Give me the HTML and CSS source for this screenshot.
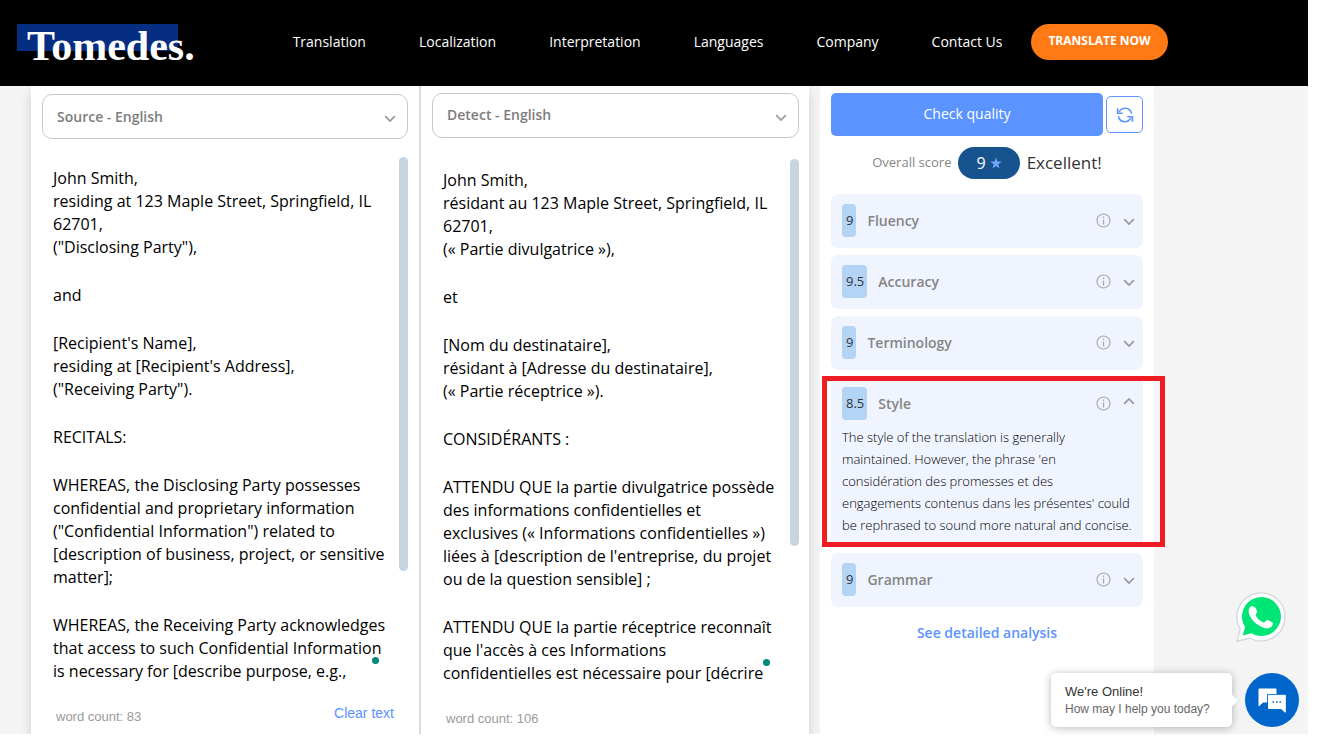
FILE: index.html
```html
<!DOCTYPE html>
<html lang="en">
<head>
<meta charset="utf-8">
<meta name="viewport" content="width=device-width, initial-scale=1">
<title>Tomedes - Translation quality</title>
<link rel="stylesheet" href="styles.css">
</head>
<body>
<svg class="sprite" aria-hidden="true">
  <symbol id="chevron" viewBox="0 0 12 8"><path d="M1.200 1.200 6 6l4.800-4.800" fill="none" stroke="currentColor" stroke-width="1.700"/></symbol>
  <symbol id="info" viewBox="0 0 15 15"><circle cx="7.500" cy="7.500" r="6.500" fill="none" stroke="currentColor" stroke-width="1.200"/><path d="M7.500 6.500v5M7.500 3.500v1.600" fill="none" stroke="currentColor" stroke-width="1.300"/></symbol>
</svg>
<div class="page">
  <header class="header">
    <a class="logo" href="#">Tomedes.</a>
    <nav class="nav">
      <a href="#">Translation</a>
      <a href="#">Localization</a>
      <a href="#">Interpretation</a>
      <a href="#">Languages</a>
      <a href="#">Company</a>
      <a href="#">Contact Us</a>
    </nav>
    <a class="cta" href="#">TRANSLATE NOW</a>
  </header>

  <main class="main">
    <div class="editor">
      <section class="column source">
        <div class="picker">
          <select aria-label="Source language"><option>Source - English</option></select>
          <svg class="chevron"><use href="#chevron"/></svg>
        </div>
        <div class="pane">
          <div class="text" role="textbox" aria-multiline="true" aria-label="Source text" contenteditable="true" spellcheck="false">
            <p>John Smith,<br>residing at 123 Maple Street, Springfield, IL 62701,<br>("Disclosing Party"),</p>
            <p>and</p>
            <p>[Recipient's Name],<br>residing at [Recipient's Address],<br>("Receiving Party").</p>
            <p>RECITALS:</p>
            <p>WHEREAS, the Disclosing Party possesses confidential and proprietary information ("Confidential Information") related to [description of business, project, or sensitive matter];</p>
            <p>WHEREAS, the Receiving Party acknowledges that access to such Confidential Information is necessary for [describe purpose, e.g.,</p>
          </div>
          <div class="scroll"></div>
          <span class="dot"></span>
        </div>
        <div class="foot">
          <span class="count">word count: 83</span>
          <button class="clear" type="button">Clear text</button>
        </div>
      </section>
      <section class="column target">
        <div class="picker">
          <select aria-label="Target language"><option>Detect - English</option></select>
          <svg class="chevron"><use href="#chevron"/></svg>
        </div>
        <div class="pane">
          <div class="text" role="textbox" aria-multiline="true" aria-label="Translated text" contenteditable="true" spellcheck="false" lang="fr">
            <p>John Smith,<br>résidant au 123 Maple Street, Springfield, IL 62701,<br>(« Partie divulgatrice »),</p>
            <p>et</p>
            <p>[Nom du destinataire],<br>résidant à [Adresse du destinataire],<br>(« Partie réceptrice »).</p>
            <p>CONSIDÉRANTS :</p>
            <p>ATTENDU QUE la partie divulgatrice possède des informations confidentielles et exclusives (« Informations confidentielles ») liées à [description de l'entreprise, du projet ou de la question sensible] ;</p>
            <p>ATTENDU QUE la partie réceptrice reconnaît que l'accès à ces Informations confidentielles est nécessaire pour [décrire</p>
          </div>
          <div class="scroll"></div>
          <span class="dot"></span>
        </div>
        <div class="foot">
          <span class="count">word count: 106</span>
        </div>
      </section>
    </div>

    <aside class="quality">
      <div class="actions">
        <button class="check" type="button">Check quality</button>
        <button class="refresh" type="button" aria-label="Refresh">
          <svg viewBox="0 0 20 20"><path d="M3.500 6.500C5 4 7.200 2.600 10 2.600c3.800 0 6.700 2.500 7.400 6M16.500 13.500c-1.500 2.500-3.700 3.900-6.500 3.900-3.800 0-6.700-2.500-7.400-6" fill="none" stroke="currentColor" stroke-width="1.700"/><path d="M1.800 2.500v5.600h5.600M18.200 17.500v-5.600h-5.600" fill="none" stroke="currentColor" stroke-width="1.800"/></svg>
        </button>
      </div>
      <div class="score">
        <span class="score-label">Overall score</span>
        <span class="pill">9 <svg viewBox="0 0 12 12"><path d="M6 .6l1.400 3.900 4.200.1-3.300 2.600 1.200 4L6 8.900l-3.500 2.300 1.200-4L.4 4.600l4.200-.1z" fill="#75a6ff"/></svg></span>
        <strong>Excellent!</strong>
      </div>
      <div class="cards">
        <article class="card">
          <button class="card-head" type="button" aria-expanded="false"><span class="badge">9</span><span class="name">Fluency</span><svg class="info"><use href="#info"/></svg><svg class="chevron"><use href="#chevron"/></svg></button>
        </article>
        <article class="card">
          <button class="card-head" type="button" aria-expanded="false"><span class="badge">9.5</span><span class="name">Accuracy</span><svg class="info"><use href="#info"/></svg><svg class="chevron"><use href="#chevron"/></svg></button>
        </article>
        <article class="card">
          <button class="card-head" type="button" aria-expanded="false"><span class="badge">9</span><span class="name">Terminology</span><svg class="info"><use href="#info"/></svg><svg class="chevron"><use href="#chevron"/></svg></button>
        </article>
        <article class="card open">
          <button class="card-head" type="button" aria-expanded="true"><span class="badge">8.5</span><span class="name">Style</span><svg class="info"><use href="#info"/></svg><svg class="chevron"><use href="#chevron"/></svg></button>
          <p class="detail">The style of the translation is generally maintained. However, the phrase 'en considération des promesses et des engagements contenus dans les présentes' could be rephrased to sound more natural and concise.</p>
          <span class="highlight"></span>
        </article>
        <article class="card">
          <button class="card-head" type="button" aria-expanded="false"><span class="badge">9</span><span class="name">Grammar</span><svg class="info"><use href="#info"/></svg><svg class="chevron"><use href="#chevron"/></svg></button>
        </article>
      </div>
      <a class="more" href="#">See detailed analysis</a>
    </aside>
  </main>

  <a class="whatsapp" href="#" aria-label="WhatsApp">
    <svg viewBox="0 0 50 50"><path d="M1 49.300 4.200 37A24 24 0 1 1 13.500 46z" fill="#fff" stroke="#d0d8dc" stroke-width="1.300" stroke-linejoin="round"/><path d="M6.500 43.500l2.700-8.200A19.500 19.500 0 1 1 15.500 41.300z" fill="#00e676"/><path d="M17.200 14.500c-.6-.6-2.200-.3-2.900.6-2 2.300-2.100 5.100-.8 8 2.700 6 8.200 10.800 14.800 12.800 2.700.8 5.800.4 7.700-1.900.8-1 1.100-2.700.6-3.300-.7-.8-4.300-2.600-5.400-2.700-1.300-.1-2.400 3-3.800 2.500-3.200-1.200-6.200-4-7.700-7-.6-1.300 1.800-2.500 1.600-3.800-.2-1.200-1.700-4.700-4.100-5.200z" fill="#fff"/></svg>
  </a>
  <div class="chat">
    <div class="bubble"><strong>We're Online!</strong><span>How may I help you today?</span></div>
    <button class="chat-button" type="button" aria-label="Open chat">
      <svg viewBox="0 0 28 25"><path d="M1 1h17v6H9v7H5l-4 4z" fill="#fff" stroke="#fff" stroke-linejoin="round"/><path d="M10.500 7.300h16.800v17l-4.300-3.800H10.500z" fill="#fff" stroke="#0066cc" stroke-width="2.600"/><path d="M10.500 7.300h16.800v17l-4.300-3.800H10.500z" fill="#fff" stroke="#fff" stroke-linejoin="round"/><path d="M14.500 13.300h1.500v1.500h-1.500zM18 13.300h1.500v1.500H18zM21.500 13.300H23v1.500h-1.500z" fill="#0066cc"/></svg>
    </button>
  </div>
</div>
</body>
</html>
```
FILE: styles.css
```css
* { box-sizing: border-box; }
body {
  margin: 0;
  padding: 0 13px 2px 0;
  background: #fff;
  font-family: "Open Sans", sans-serif;
  font-size: 14px;
  color: #444;
}
button { font-family: inherit; border: 0; padding: 0; cursor: pointer; }
a { text-decoration: none; }
p { margin: 0; }
.sprite { display: none; }
.page {
  position: relative;
  display: flex;
  flex-direction: column;
  min-height: calc(100vh - 2px);
  background: #f4f4f4;
}

.header {
  display: flex;
  align-items: center;
  min-height: 86px;
  padding: 0 17px 2px;
  background: #000;
}
.logo {
  height: 36px;
  margin-right: 98px;
  padding-left: 10px;
  background: linear-gradient(#052d82, #052d82) no-repeat 0 0 / 161px 27px;
  color: #fff;
  font: bold 42px/44px "Liberation Serif", serif;
}
.nav { display: flex; gap: 53px; }
.nav a { color: #fff; line-height: 20px; white-space: nowrap; }
.cta {
  height: 36px;
  margin-left: 29px;
  padding: 0 17px;
  border-radius: 18px;
  background: #ff7a14;
  color: #fff;
  font-size: 12px;
  font-weight: 700;
  line-height: 34px;
  white-space: nowrap;
}

.main {
  flex: 1;
  display: grid;
  grid-template-columns: 778fr 334fr;
  gap: 11px;
  padding: 0 154px 0 31px;
}
.editor {
  display: grid;
  grid-template-columns: 390fr 388fr;
  background: #fff;
  box-shadow: 0 6px 10px rgba(0, 0, 0, 0.16);
  clip-path: inset(0 -11px 0 -12px);
}
.column { display: flex; flex-direction: column; padding: 8px 11px 0; }
.source { border-right: 2px solid #dcdcdc; }
.target { padding: 7px 10px 0 11px; }
.picker { position: relative; }
.picker select {
  appearance: none;
  width: 100%;
  height: 45px;
  padding: 0 14px;
  border: 1px solid #c8c8c8;
  border-radius: 10px;
  background: #fff;
  color: #7d7d7d;
  font: 600 14px "Open Sans", sans-serif;
}
.target .picker select { padding-bottom: 2px; }
.chevron { flex: none; width: 12px; height: 8px; color: #999; }
.picker .chevron { position: absolute; right: 12px; top: 21px; }
.pane { position: relative; display: flex; height: 530px; margin-top: 18px; }
.target .pane { margin-top: 21px; }
.text {
  flex: 1;
  display: flex;
  flex-direction: column;
  gap: 25px;
  padding: 10px 12px 0 11px;
  color: #000;
  font-size: 16px;
  line-height: 23px;
}
.scroll { flex: none; width: 9px; height: 414px; border-radius: 5px; background: #c8d5de; }
.target .scroll { height: 387px; }
.dot {
  position: absolute;
  right: 29px;
  bottom: 23px;
  width: 7px;
  height: 7px;
  border-radius: 50%;
  background: #00897b;
}
.foot {
  display: flex;
  justify-content: space-between;
  padding: 16px 14px 0;
  font-family: "Liberation Sans", sans-serif;
  line-height: 20px;
}
.count { padding-top: 4px; color: #999; font-size: 13px; }
.clear { align-self: flex-start; background: none; color: #5b93ff; font-family: inherit; font-size: 14px; line-height: 20px; }

.quality { padding: 7px 11px 0; background: #fff; }
.actions { display: flex; align-items: center; gap: 3px; }
.check { flex: 1; height: 43px; padding-bottom: 2px; border-radius: 5px; background: #5b93ff; color: #fff; font-size: 14px; }
.refresh {
  display: grid;
  place-items: center;
  width: 37px;
  height: 37px;
  border: 1px solid #5b93ff;
  border-radius: 5px;
  background: #fff;
  color: #5b93ff;
}
.refresh svg { width: 18px; height: 18px; }
.score { display: flex; justify-content: center; align-items: center; gap: 7px; margin-top: 11px; }
.score-label { padding-bottom: 2px; color: #858585; font-size: 13px; }
.pill {
  display: flex;
  align-items: center;
  gap: 4px;
  height: 32px;
  padding: 0 18px;
  border-radius: 16px;
  background: #17548f;
  color: #fff;
  font-size: 16px;
  line-height: 30px;
}
.pill svg { width: 12px; height: 12px; }
.score strong { padding-bottom: 2px; font-size: 17px; font-weight: 400; color: #333; }
.cards { display: flex; flex-direction: column; gap: 7px; margin-top: 15px; }
.card { position: relative; border-radius: 7px; background: #f0f4ff; }
.card-head {
  display: flex;
  align-items: center;
  width: 100%;
  height: 54px;
  padding: 0 8px 2px 11px;
  background: none;
  text-align: left;
}
.badge {
  height: 33px;
  padding: 0 3px 0 4px;
  border-radius: 4px;
  background: #b3d4f5;
  color: #333;
  font-size: 13px;
  line-height: 32px;
}
.name { flex: 1; margin-left: 11px; color: #858585; font-size: 14px; font-weight: 600; }
.info { width: 15px; height: 15px; margin-right: 12px; color: #aaa; }
.card-head .chevron { margin-top: 4px; }
.open .card-head .chevron { margin: 0 0 4px; transform: rotate(180deg); }
.detail { margin-top: -5px; padding: 0 8px 10px 11px; font-size: 13px; font-weight: 300; line-height: 22px; color: #000; }
.highlight { position: absolute; inset: -1px -22px -1px -9px; border: 5px solid #ef1c24; }
.more { display: block; margin-top: 16px; color: #5b93ff; font-weight: 600; line-height: 20px; text-align: center; }

.whatsapp { position: absolute; right: 22px; bottom: 92px; width: 50px; height: 50px; }
.whatsapp svg { display: block; }
.chat { position: absolute; right: 9px; bottom: 7px; display: flex; align-items: center; gap: 13px; }
.bubble {
  position: relative;
  display: flex;
  flex-direction: column;
  width: 181px;
  padding: 10px 14px 9px;
  border-radius: 5px;
  background: #fff;
  box-shadow: 0 1px 8px rgba(0, 0, 0, 0.28);
  color: #666;
  font-family: "Liberation Sans", sans-serif;
  font-size: 12px;
  line-height: 17px;
}
.bubble::after {
  content: "";
  position: absolute;
  right: -4px;
  top: 23px;
  width: 9px;
  height: 9px;
  background: #fff;
  transform: rotate(45deg);
}
.bubble strong { color: #333; font-size: 13px; font-weight: 400; line-height: 18px; }
.chat-button {
  display: grid;
  place-items: center;
  width: 54px;
  height: 54px;
  border-radius: 50%;
  background: #0066cc;
}
.chat-button svg { width: 28px; height: 25px; }
```
